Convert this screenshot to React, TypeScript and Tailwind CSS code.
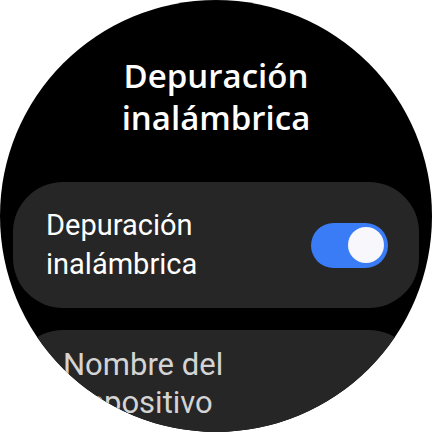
export default function App() {
  return (
    <div className="w-[432px] h-[432px] bg-white">
      <div className="w-[432px] h-[432px] rounded-full overflow-hidden bg-black" style={{ fontFamily: 'Roboto, "Noto Sans", sans-serif' }}>
        {/* Title */}
        <div className="pt-[55px] text-center text-white text-[33px] font-semibold leading-[42px]" style={{ fontFamily: '"Open Sans", sans-serif' }}>
          <div>Depuración</div>
          <div>inalámbrica</div>
        </div>

        <div className="mt-[43px] flex flex-col gap-[22px] px-[13px]">
          {/* Wireless debugging toggle */}
          <div className="h-[126px] rounded-[50px] bg-[#262626] flex items-center justify-between pl-[33px] pr-[31px]">
            <div className="text-white text-[29px] leading-[39px]">
              <div>Depuración</div>
              <div>inalámbrica</div>
            </div>
            <div className="w-[77px] h-[45px] rounded-full bg-[#3a7cf5] flex items-center justify-end pr-[4px]">
              <div className="w-[36px] h-[36px] rounded-full bg-[#f8f8fc]" />
            </div>
          </div>

          {/* Device name */}
          <div className="h-[126px] rounded-[50px] bg-[#262626] pl-[50px] pt-[16px]">
            <div className="text-[#d4d4d4] text-[31px] leading-[38px]">
              <div>Nombre del</div>
              <div>dispositivo</div>
            </div>
          </div>
        </div>
      </div>
    </div>
  );
}
